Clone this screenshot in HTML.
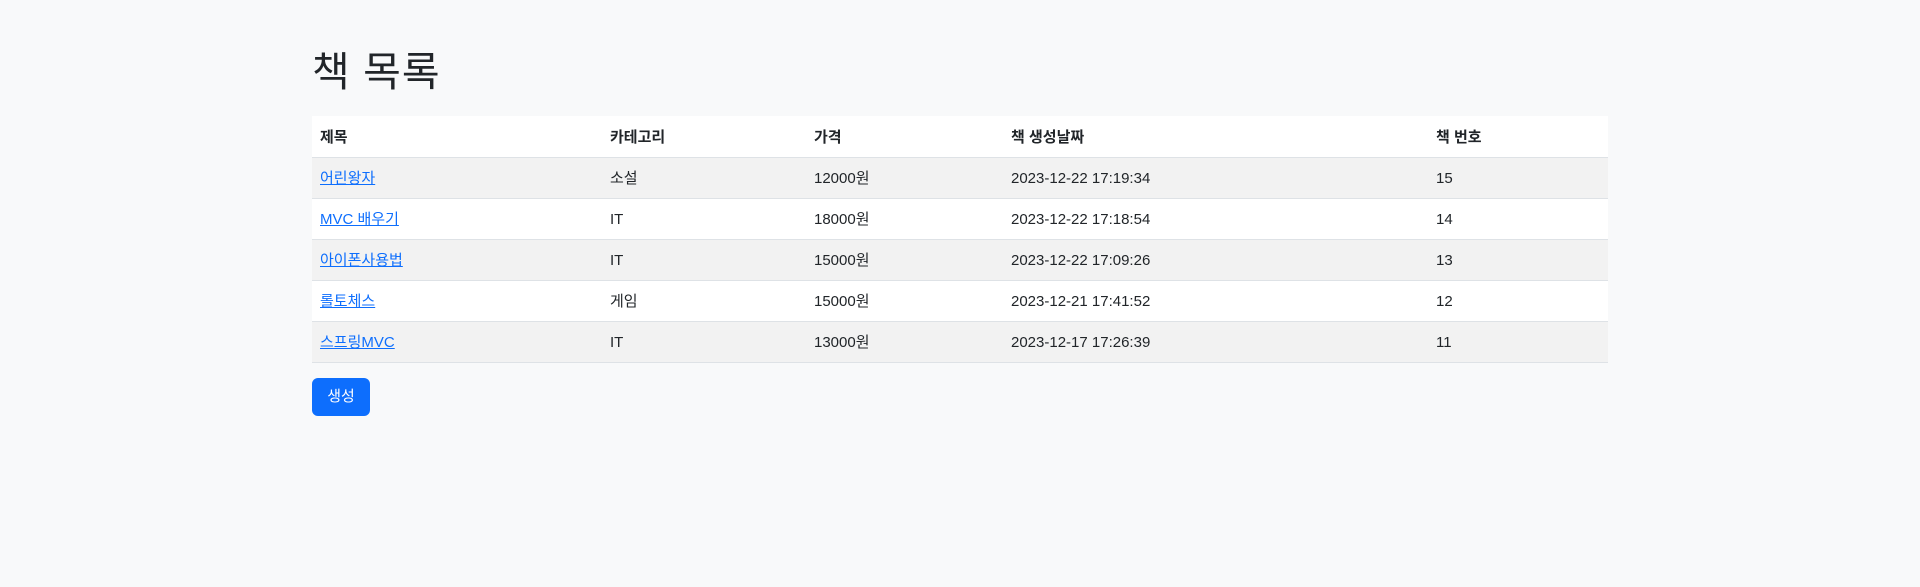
<!DOCTYPE html>
<html><head><meta charset="utf-8"><style>
body{margin:0;background:#f8f9fa;font-family:"Liberation Sans","Noto Sans CJK KR",sans-serif;color:#212529;font-size:16px;width:1920px;height:587px;overflow:hidden}
.c{position:absolute;left:312px;width:1296px;top:0}
h1{position:absolute;top:48px;left:0;margin:0;font-size:41px;font-weight:400;line-height:48px;letter-spacing:1px}
table{position:absolute;top:116px;left:0;width:1296px;border-collapse:collapse;table-layout:fixed}
td,th{height:41px;padding:3px 8px 0;box-sizing:border-box;border-bottom:1px solid #dee2e6;text-align:left;font-size:15px;line-height:20px}
th{font-weight:700;background:#fff}
tbody tr:nth-child(odd) td{background:#f2f2f2}
tbody tr:nth-child(even) td{background:#fff}
a{color:#0d6efd}
.btn{position:absolute;top:378px;left:0;width:58px;height:38px;background:#0d6efd;color:#fff;border-radius:6px;text-align:center;line-height:38px;font-size:15px}
</style></head><body><div class="c">
<h1>책 목록</h1>
<table><colgroup><col style="width:290px"><col style="width:204px"><col style="width:197px"><col style="width:425px"><col></colgroup>
<thead><tr><th>제목</th><th>카테고리</th><th>가격</th><th>책 생성날짜</th><th>책 번호</th></tr></thead>
<tbody>
<tr><td><a href="#">어린왕자</a></td><td>소설</td><td>12000원</td><td>2023-12-22 17:19:34</td><td>15</td></tr>
<tr><td><a href="#">MVC 배우기</a></td><td>IT</td><td>18000원</td><td>2023-12-22 17:18:54</td><td>14</td></tr>
<tr><td><a href="#">아이폰사용법</a></td><td>IT</td><td>15000원</td><td>2023-12-22 17:09:26</td><td>13</td></tr>
<tr><td><a href="#">롤토체스</a></td><td>게임</td><td>15000원</td><td>2023-12-21 17:41:52</td><td>12</td></tr>
<tr><td><a href="#">스프링MVC</a></td><td>IT</td><td>13000원</td><td>2023-12-17 17:26:39</td><td>11</td></tr>
</tbody></table>
<div class="btn">생성</div>
</div></body></html>
